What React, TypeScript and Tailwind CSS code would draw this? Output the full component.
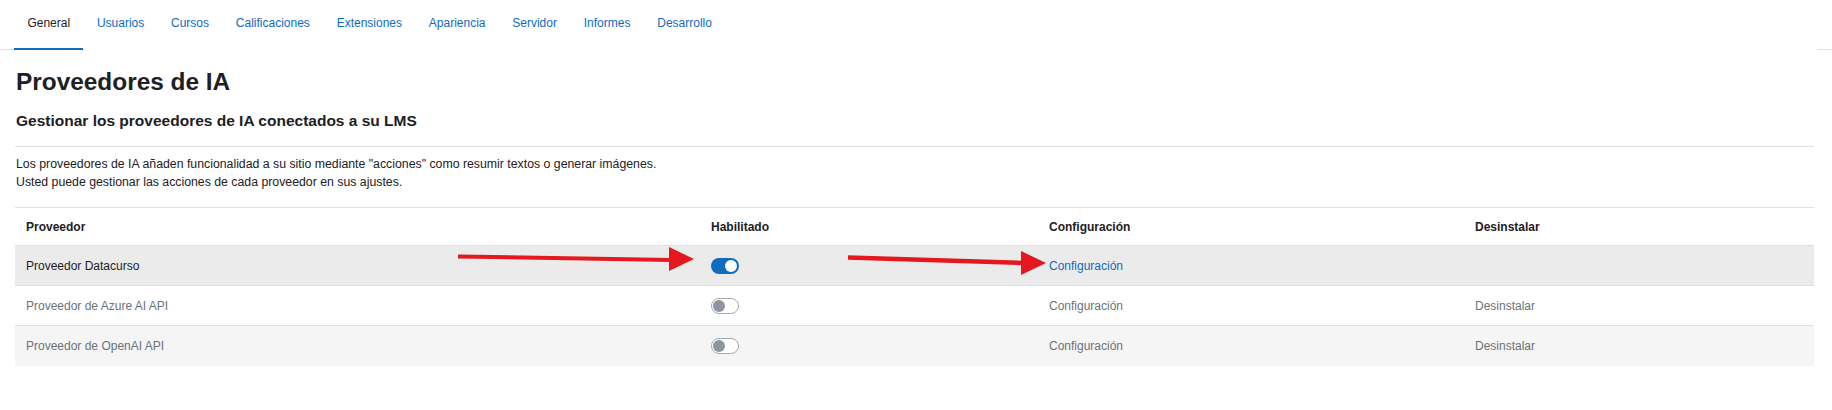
import React from 'react';

const tabs = ['General', 'Usuarios', 'Cursos', 'Calificaciones', 'Extensiones', 'Apariencia', 'Servidor', 'Informes', 'Desarrollo'];

const providers = [
  { name: 'Proveedor Datacurso', enabled: true, uninstall: false, bg: 'bg-[#ebebeb]' },
  { name: 'Proveedor de Azure AI API', enabled: false, uninstall: true, bg: 'bg-white' },
  { name: 'Proveedor de OpenAI API', enabled: false, uninstall: true, bg: 'bg-[#f5f5f5]' },
];

function Toggle({ on }: { on: boolean }) {
  if (on) {
    return (
      <span className="flex h-[16px] w-[28px] items-center justify-end rounded-full bg-[#0f6cbf] px-[2px]">
        <span className="h-[12px] w-[12px] rounded-full bg-white" />
      </span>
    );
  }
  return (
    <span className="flex h-[16px] w-[28px] items-center rounded-full border border-[#a3aab1] bg-white px-[1px]">
      <span className="h-[12px] w-[12px] rounded-full bg-[#8f959e]" />
    </span>
  );
}

export default function App() {
  return (
    <div className="relative min-h-[410px] bg-white text-[#1d2125]" style={{ fontFamily: '"Liberation Sans", Arial, sans-serif' }}>
      {/* Tabs */}
      <nav className="flex h-[50px]">
        <div className="w-[14px] border-b border-[#dee2e6]" />
        {tabs.map((t, i) => (
          <a
            key={t}
            className={
              'flex h-[50px] items-start px-[13.4px] pt-[15px] text-[12px] leading-[16px] ' +
              (i === 0 ? 'border-b-2 border-[#0f6cbf] text-[#1d2125]' : 'text-[#0f6cbf]')
            }
          >
            {t}
          </a>
        ))}
        <div className="flex-1" />
        <div className="w-[15px] border-b border-[#dee2e6]" />
      </nav>

      <div className="pl-[15px] pr-[18px]">
        <h2 className="mt-[17px] pl-[1px] text-[24.4px] font-bold leading-[29px]">Proveedores de IA</h2>
        <h3 className="mt-[15px] pl-[1px] text-[15.5px] font-bold leading-[19px]">
          Gestionar los proveedores de IA conectados a su LMS
        </h3>
        <div className="mt-[16px] border-t border-[#dee2e6]" />
        <p className="mt-[9px] pl-[1px] text-[12.3px] leading-[17.5px]">
          Los proveedores de IA añaden funcionalidad a su sitio mediante "acciones" como resumir textos o generar imágenes.
          <br />
          Usted puede gestionar las acciones de cada proveedor en sus ajustes.
        </p>

        {/* Table */}
        <div className="mt-[16px] text-[12px]">
          <div className="grid h-[39px] grid-cols-[684px_338px_426px_1fr] items-center border-y border-[#dee2e6] font-bold">
            <div className="px-[11px]">Proveedor</div>
            <div className="px-[12px]">Habilitado</div>
            <div className="px-[12px]">Configuración</div>
            <div className="px-[12px]">Desinstalar</div>
          </div>
          {providers.map((p, i) => (
            <div
              key={p.name}
              className={
                'grid h-[40px] grid-cols-[684px_338px_426px_1fr] items-center ' +
                p.bg +
                (i < providers.length - 1 ? ' border-b border-[#dee2e6]' : '')
              }
            >
              <div className={'px-[11px] ' + (p.enabled ? 'text-[#1d2125]' : 'text-[#6a737b]')}>{p.name}</div>
              <div className="px-[12px]">
                <Toggle on={p.enabled} />
              </div>
              <div className={'px-[12px] ' + (p.enabled ? 'text-[#0f6cbf]' : 'text-[#6a737b]')}>Configuración</div>
              <div className="px-[12px] text-[#6a737b]">{p.uninstall ? 'Desinstalar' : ''}</div>
            </div>
          ))}
        </div>
      </div>

      {/* Annotation arrows */}
      <svg className="pointer-events-none absolute inset-0 h-full w-full" viewBox="0 0 1832 410" preserveAspectRatio="none">
        <line x1="458" y1="256.5" x2="672" y2="260" stroke="#e3191f" strokeWidth="4" />
        <polygon points="669,247 669,271 694,259" fill="#e3191f" />
        <line x1="848" y1="257.5" x2="1024" y2="263" stroke="#e3191f" strokeWidth="4.5" />
        <polygon points="1021,251 1021,275 1046,263" fill="#e3191f" />
      </svg>
    </div>
  );
}
